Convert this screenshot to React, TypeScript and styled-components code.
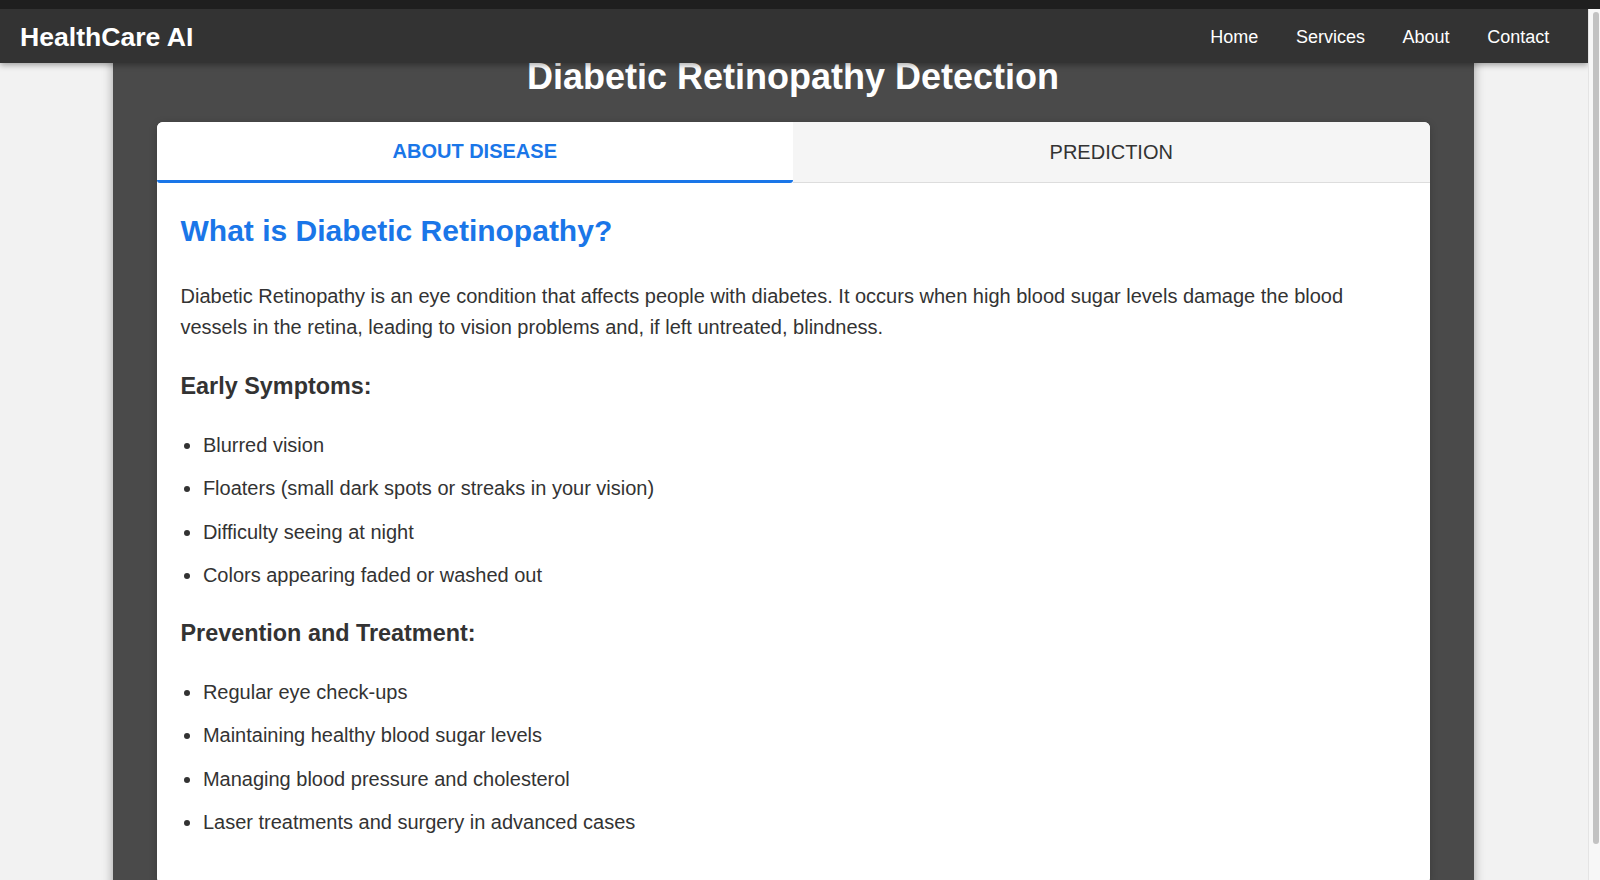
import styled, { createGlobalStyle } from 'styled-components';

const GlobalStyle = createGlobalStyle`
    html, body {
        margin : 0;
        padding : 0;
        height : 880px;
        overflow : hidden;
        background : #f2f2f2;
        font-family : "Liberation Sans", Arial, Helvetica, sans-serif;
    }
    * {
        box-sizing : border-box;
    }
`;

const BLUE = '#1a76e8';
const TEXT = '#333333';

const Frame = styled.div`
    display : flex;
    flex-direction : column;
    width : 1600px;
    height : 880px;
`;

const TopStrip = styled.div`
    height : 9px;
    background : #1f1f1f;
    flex-shrink : 0;
`;

const Window = styled.div`
    display : flex;
    flex-direction : row;
    flex : 1;
    min-height : 0;
`;

const Viewport = styled.div`
    position : relative;
    flex : 1;
    overflow : hidden;
    padding-right : 2px;
    background : #f2f2f2;
`;

const Scrollbar = styled.div`
    width : 12px;
    flex-shrink : 0;
    background : #f7f7f7;
    border-left : 1px solid #e4e4e4;
    padding : 3px 1px 0 4px;
`;

const ScrollThumb = styled.div`
    width : 6px;
    height : 832px;
    border-radius : 3px;
    background : #c2c2c2;
`;

const Navbar = styled.nav`
    position : absolute;
    top : 0;
    left : 0;
    right : 0;
    z-index : 10;
    height : 54px;
    display : flex;
    align-items : center;
    justify-content : space-between;
    padding : 2px 20px 0;
    background : #333333;
    box-shadow : 0 2px 6px rgba(0, 0, 0, 0.35);
`;

const Logo = styled.div`
    color : #ffffff;
    font-size : 26.6px;
    font-weight : bold;
`;

const NavLinks = styled.ul`
    list-style : none;
    display : flex;
    flex-direction : row;
    margin : 0;
    padding : 0;
`;

const NavLink = styled.li`
    color : #ffffff;
    font-size : 18px;
    padding : 0 18.8px;
`;

const Main = styled.main`
    width : 1361px;
    margin : 0 auto;
    padding : 47px 44px 40px;
    background : #4a4a4a;
    box-shadow : 0 0 10px rgba(0, 0, 0, 0.35);
`;

const Title = styled.h1`
    margin : 0 0 24.3px;
    color : #ffffff;
    font-size : 36px;
    line-height : 42px;
    font-weight : bold;
    text-align : center;
`;

const Card = styled.section`
    background : #ffffff;
    border-radius : 6px;
    overflow : hidden;
    box-shadow : 0 2px 8px rgba(0, 0, 0, 0.2);
`;

const TabBar = styled.div`
    display : grid;
    grid-template-columns : 1fr 1fr;
    height : 61px;
`;

const Tab = styled.button<{ $active? : boolean }>`
    display : flex;
    align-items : center;
    justify-content : center;
    border : none;
    border-bottom : ${p => p.$active ? `3px solid ${BLUE}` : '1px solid #dddddd'};
    border-radius : ${p => p.$active ? '0 0 3px 3px' : '0'};
    background : ${p => p.$active ? '#ffffff' : '#f5f5f5'};
    color : ${p => p.$active ? BLUE : TEXT};
    font-family : inherit;
    font-size : 20px;
    font-weight : ${p => p.$active ? 'bold' : 'normal'};
    text-transform : uppercase;
    cursor : pointer;
`;

const Content = styled.div`
    padding : 30px 24px 46px;
    color : ${TEXT};
`;

const Heading = styled.h2`
    margin : 0;
    color : ${BLUE};
    font-size : 30px;
    line-height : 36px;
    font-weight : bold;
`;

const Paragraph = styled.p`
    margin : 31.6px 0 0;
    font-size : 20px;
    line-height : 31.6px;
`;

const SubHeading = styled.h3`
    margin : 27.6px 0 0;
    font-size : 23.4px;
    line-height : 28px;
    font-weight : bold;
`;

const BulletList = styled.ul`
    display : flex;
    flex-direction : column;
    gap : 11.5px;
    margin : 29px 0 0;
    padding : 0 0 0 22.4px;
    list-style : disc;
`;

const BulletItem = styled.li`
    font-size : 20px;
    line-height : 32px;
`;

const symptoms = [
    'Blurred vision',
    'Floaters (small dark spots or streaks in your vision)',
    'Difficulty seeing at night',
    'Colors appearing faded or washed out',
];

const prevention = [
    'Regular eye check-ups',
    'Maintaining healthy blood sugar levels',
    'Managing blood pressure and cholesterol',
    'Laser treatments and surgery in advanced cases',
];

function App() {
    return (
        <>
            <GlobalStyle />
            <Frame>
                <TopStrip />
                <Window>
                    <Viewport>
                        <Navbar>
                            <Logo>HealthCare AI</Logo>
                            <NavLinks>
                                {['Home', 'Services', 'About', 'Contact'].map(link => (
                                    <NavLink key={link}>{link}</NavLink>
                                ))}
                            </NavLinks>
                        </Navbar>
                        <Main>
                            <Title>Diabetic Retinopathy Detection</Title>
                            <Card>
                                <TabBar>
                                    <Tab $active>About Disease</Tab>
                                    <Tab>Prediction</Tab>
                                </TabBar>
                                <Content>
                                    <Heading>What is Diabetic Retinopathy?</Heading>
                                    <Paragraph>
                                        Diabetic Retinopathy is an eye condition that affects people with diabetes. It occurs when high blood sugar levels damage the blood vessels in the retina, leading to vision problems and, if left untreated, blindness.
                                    </Paragraph>
                                    <SubHeading>Early Symptoms:</SubHeading>
                                    <BulletList>
                                        {symptoms.map(item => (
                                            <BulletItem key={item}>{item}</BulletItem>
                                        ))}
                                    </BulletList>
                                    <SubHeading>Prevention and Treatment:</SubHeading>
                                    <BulletList>
                                        {prevention.map(item => (
                                            <BulletItem key={item}>{item}</BulletItem>
                                        ))}
                                    </BulletList>
                                </Content>
                            </Card>
                        </Main>
                    </Viewport>
                    <Scrollbar>
                        <ScrollThumb />
                    </Scrollbar>
                </Window>
            </Frame>
        </>
    )
}

export default App;
